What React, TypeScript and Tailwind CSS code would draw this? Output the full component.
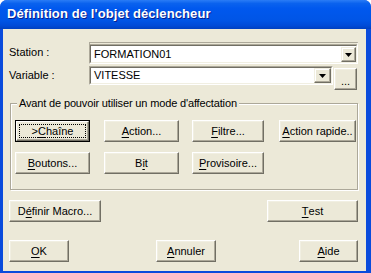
import type { ReactNode } from "react";

const FONT = "font-['Liberation_Sans',Arial,sans-serif]";

function Btn({ className, children }: { className: string; children: ReactNode }) {
  return (
    <div
      className={`flex h-[22px] shrink-0 items-center justify-center border border-t-white border-l-white border-r-[#716F64] border-b-[#716F64] bg-[#ECE9D8] text-[11px] text-black shadow-[inset_-1px_-1px_0_#ACA899,inset_1px_1px_0_#F1EFE2] ${className}`}
    >
      {children}
    </div>
  );
}

function DefaultBtn({ className, children }: { className: string; children: ReactNode }) {
  return (
    <div className={`flex h-[22px] shrink-0 border border-black ${className}`}>
      <div className="flex flex-1 items-center justify-center border border-t-white border-l-white border-r-[#716F64] border-b-[#716F64] bg-[#ECE9D8] p-[2px] shadow-[inset_-1px_-1px_0_#ACA899]">
        <div className="flex h-full w-full items-center justify-center border border-dotted border-black text-[11px] text-black">
          {children}
        </div>
      </div>
    </div>
  );
}

function Arrow() {
  return (
    <svg width="7" height="4" viewBox="0 0 7 4">
      <polygon points="0,0 7,0 3.5,4" fill="#000" />
    </svg>
  );
}

function DropBtn({ className }: { className: string }) {
  return (
    <div
      className={`flex shrink-0 items-center justify-center border border-t-[#F1EFE2] border-l-[#F1EFE2] border-r-[#716F64] border-b-[#716F64] bg-[#ECE9D8] shadow-[inset_-1px_-1px_0_#ACA899,inset_1px_1px_0_#fff] ${className}`}
    >
      <Arrow />
    </div>
  );
}

function U({ children }: { children: ReactNode }) {
  return <span className="underline underline-offset-[2px]">{children}</span>;
}

export default function App() {
  return (
    <div className={`h-[273px] w-[371px] overflow-hidden bg-white ${FONT}`}>
      <div className="flex h-full w-full flex-col overflow-hidden rounded-t-[7px] bg-[#0A4BDC]">
        {/* title bar */}
        <div className="flex h-[29px] shrink-0 items-center bg-[linear-gradient(to_bottom,#2A7CF6_0%,#0A62EE_12%,#0058EE_30%,#0055E6_70%,#004BD8_88%,#0040C0_100%)] pl-[7px] pb-[1px]">
          <span className="text-[13px] font-bold tracking-[0.1px] text-white [text-shadow:1px_1px_0_#0A1E8C]">
            Définition de l'objet déclencheur
          </span>
        </div>

        {/* client area */}
        <div className="ml-[3px] mr-[5px] mb-[2px] flex flex-1 flex-col bg-[#ECE9D8] pl-[6px] text-[11px] text-black">
          {/* Station */}
          <div className="mt-[13px] flex h-[22px] items-center">
            <span className="w-[80px] shrink-0 pb-[1px]">Station :</span>
            <div className="flex h-[22px] w-[269px] border border-t-[3px] border-double border-t-[#ACA899] border-l-[#ACA899] border-r-white border-b-white">
              <div className="flex flex-1 items-center border border-t-[#716F64] border-l-[#716F64] border-r-[#F1EFE2] border-b-[#F1EFE2] bg-white pl-[3px]">
                <span className="flex-1 pt-[1px]">FORMATION01</span>
                <DropBtn className="mt-[1px] h-[15px] w-[15px]" />
              </div>
            </div>
          </div>

          {/* Variable */}
          <div className="mt-[2px] flex h-[19px] items-start">
            <span className="w-[80px] shrink-0 self-center">Variable :</span>
            <div className="flex h-[19px] w-[244px] border border-t-[#ACA899] border-l-[#ACA899] border-r-white border-b-white">
              <div className="flex flex-1 items-center border border-t-[#716F64] border-l-[#716F64] border-r-[#F1EFE2] border-b-[#F1EFE2] bg-white pl-[3px]">
                <span className="flex-1">VITESSE</span>
                <DropBtn className="h-[15px] w-[17px]" />
              </div>
            </div>
            <Btn className="ml-[1px] mt-[2px] h-[16px] w-[23px] items-end pb-[2px] leading-none">...</Btn>
          </div>

          {/* group box */}
          <div className="relative mt-[18px] ml-[1px] flex h-[87px] w-[348px] flex-col border border-[#ACA899] pl-[4px] pt-[16px] shadow-[inset_1px_1px_0_#fff,1px_1px_0_#fff]">
            <span className="absolute -top-[8px] left-[6px] bg-[#ECE9D8] px-[2px] leading-[14px] tracking-[-0.15px]">
              Avant de pouvoir utiliser un mode d'affectation
            </span>
            <div className="flex">
              <DefaultBtn className="w-[75px]">
                &gt;<U>C</U>haîne
              </DefaultBtn>
              <Btn className="ml-[14px] w-[75px]">
                <U>A</U>ction...
              </Btn>
              <Btn className="ml-[13px] w-[72px]">
                <U>F</U>iltre...
              </Btn>
              <Btn className="ml-[15px] w-[77px]">
                <U>A</U>ction rapide..
              </Btn>
            </div>
            <div className="mt-[10px] flex">
              <Btn className="w-[75px]">
                <U>B</U>outons...
              </Btn>
              <Btn className="ml-[14px] w-[75px]">
                B<U>i</U>t
              </Btn>
              <Btn className="ml-[13px] w-[72px]">
                <U>P</U>rovisoire...
              </Btn>
            </div>
          </div>

          {/* macro / test */}
          <div className="mt-[10px] flex">
            <Btn className="w-[92px]">
              D<U>é</U>finir Macro...
            </Btn>
            <Btn className="ml-[166px] w-[91px]">
              <U>T</U>est
            </Btn>
          </div>

          {/* ok / annuler / aide */}
          <div className="mt-[18px] flex">
            <Btn className="w-[60px]">
              <U>O</U>K
            </Btn>
            <Btn className="ml-[87px] w-[60px]">
              <U>A</U>nnuler
            </Btn>
            <Btn className="ml-[83px] w-[59px]">
              <U>A</U>ide
            </Btn>
          </div>
        </div>
      </div>
    </div>
  );
}
